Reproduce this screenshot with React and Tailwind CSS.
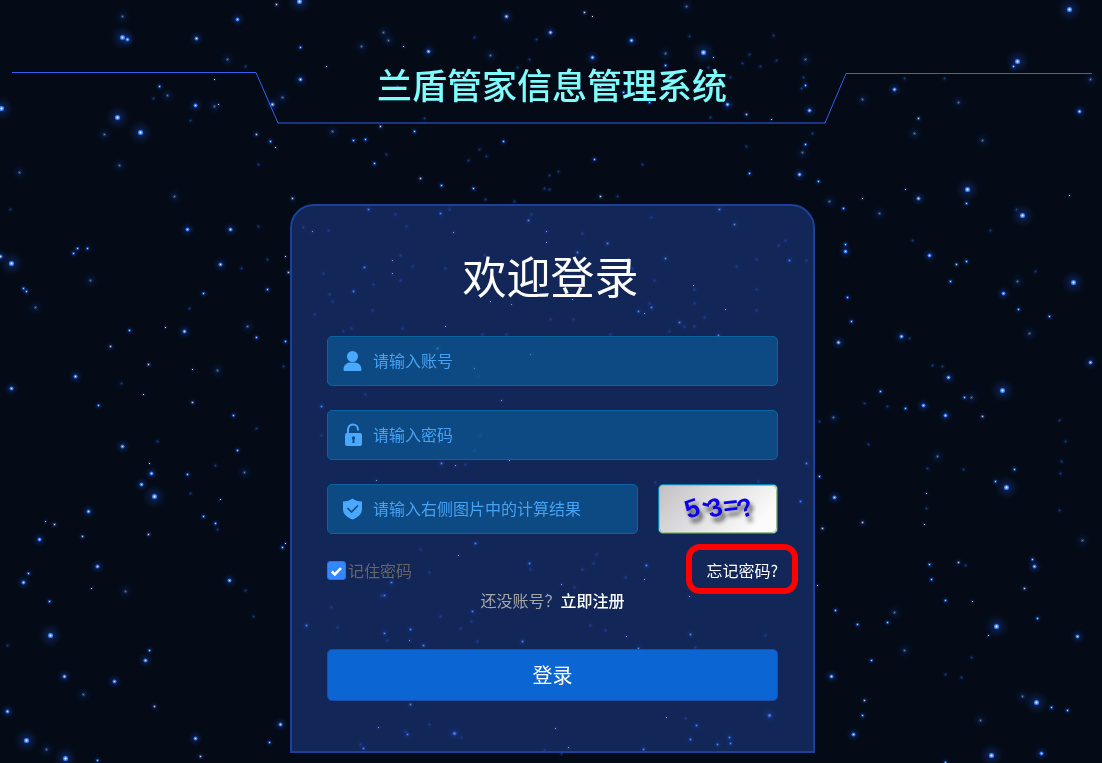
import { useState } from 'react';

// [x, y] lists, grouped by how strongly the star shines
const STARS = {
  bright: [
    [299, 1], [1, 108], [140, 132], [703, 52], [1069, 9], [967, 189], [1017, 61], [11, 263], [154, 496], [50, 635], [26, 740],
    [65, 758], [1073, 282], [1002, 390], [1006, 487], [996, 626], [1036, 702], [991, 755], [122, 37], [117, 117], [1022, 215],
  ],
  mid: [
    [127, 39], [196, 38], [237, 19], [300, 79], [187, 229], [230, 229], [195, 105], [272, 104], [506, 16], [428, 51], [550, 32],
    [631, 40], [592, 57], [727, 104], [809, 110], [799, 174], [918, 198], [1079, 111], [0, 256], [220, 264], [184, 331], [75, 376],
    [11, 388], [122, 446], [151, 473], [141, 484], [88, 511], [39, 539], [229, 580], [145, 660], [114, 681], [64, 676], [7, 711],
    [195, 738], [280, 724], [845, 251], [929, 255], [838, 342], [901, 336], [1003, 293], [1090, 362], [948, 377], [923, 405],
    [945, 415], [834, 497], [1034, 566], [1077, 636], [831, 676], [853, 734], [1041, 753], [97, 566], [894, 89], [769, 715], [454, 733],
    [23, 582],
  ],
  small: [
    [300, 47], [276, 4], [256, 134], [270, 141], [292, 198], [353, 140], [365, 139], [159, 86], [77, 248], [87, 248], [473, 188],
    [441, 185], [420, 178], [374, 163], [503, 141], [414, 131], [380, 126], [594, 159], [600, 196], [584, 12], [665, 65], [649, 102],
    [623, 92], [600, 86], [454, 81], [746, 114], [805, 85], [805, 144], [749, 173], [818, 181], [843, 208], [918, 118], [966, 203],
    [1013, 66], [845, 244], [73, 253], [23, 288], [26, 291], [288, 272], [267, 289], [203, 293], [129, 330], [256, 337], [285, 341],
    [110, 346], [148, 364], [98, 405], [192, 402], [233, 415], [237, 450], [187, 474], [54, 524], [82, 536], [148, 534], [203, 516],
    [215, 523], [282, 547], [28, 573], [49, 601], [149, 650], [154, 706], [97, 760], [200, 756], [269, 742], [956, 264], [966, 261],
    [950, 281], [847, 297], [851, 321], [1018, 309], [1049, 316], [964, 397], [905, 408], [880, 391], [982, 416], [1014, 469],
    [995, 481], [819, 476], [862, 522], [822, 528], [929, 564], [958, 562], [931, 579], [1032, 559], [1024, 588], [945, 600],
    [835, 610], [887, 622], [857, 624], [1037, 618], [871, 660], [864, 700], [862, 715], [1051, 707], [1067, 710], [945, 762],
    [368, 209], [440, 213], [528, 220], [607, 243], [734, 224], [665, 258], [577, 252], [364, 267], [353, 291], [679, 322], [718, 335],
    [651, 307], [638, 311], [789, 260], [410, 629], [423, 645], [472, 611], [522, 641], [638, 648], [690, 634], [767, 677], [410, 704],
    [363, 748], [643, 749], [696, 725], [690, 739], [729, 737], [730, 743], [717, 744], [407, 734], [306, 625], [391, 582], [475, 543],
    [384, 595], [529, 563], [646, 565], [800, 501], [806, 463], [441, 463], [321, 406], [437, 348], [719, 209], [384, 633],
  ],
  spark: [
    [326, 66], [218, 104], [275, 147], [214, 79], [592, 16], [713, 57], [862, 198], [905, 189], [1069, 195], [165, 327], [192, 369],
    [143, 394], [45, 521], [285, 543], [91, 588], [926, 493], [924, 524], [817, 585], [972, 601], [988, 635], [312, 231], [546, 231],
    [546, 242], [453, 232], [392, 260], [392, 273], [445, 326], [644, 313], [725, 309], [693, 285], [511, 304], [490, 301], [572, 299],
    [474, 368], [501, 400], [530, 354], [509, 460], [455, 465], [376, 480], [458, 555], [561, 584], [644, 579], [626, 636], [409, 640],
    [547, 594], [378, 727], [555, 728], [666, 717], [568, 747], [689, 596], [285, 256], [771, 119], [403, 46], [149, 463], [220, 499],
  ],
  dim: [
    [122, 16], [227, 59], [361, 46], [167, 95], [214, 106], [282, 97], [104, 134], [119, 165], [19, 172], [174, 196], [332, 131],
    [388, 40], [383, 32], [490, 55], [686, 6], [665, 53], [805, 59], [802, 152], [829, 201], [879, 213], [862, 99], [958, 102],
    [914, 133], [982, 140], [1090, 79], [35, 307], [90, 280], [247, 326], [217, 370], [244, 472], [125, 591], [83, 694], [46, 749],
    [1017, 281], [1029, 333], [971, 397], [833, 417], [937, 456], [1082, 540], [894, 612], [904, 650], [1022, 696], [980, 720],
  ],
  faint: [
    [245, 66], [153, 98], [190, 120], [258, 164], [10, 209], [258, 226], [303, 227], [328, 230], [474, 37], [536, 39], [517, 67],
    [529, 59], [689, 36], [708, 67], [730, 77], [710, 117], [397, 86], [479, 149], [486, 156], [468, 160], [485, 199], [514, 201],
    [549, 175], [558, 171], [544, 188], [549, 189], [642, 164], [617, 196], [386, 154], [424, 118], [773, 35], [749, 54], [742, 63],
    [760, 66], [776, 60], [803, 77], [801, 88], [746, 146], [812, 133], [904, 78], [944, 78], [1016, 209], [990, 230], [912, 240],
    [241, 268], [267, 259], [189, 308], [283, 366], [121, 383], [256, 428], [157, 441], [215, 465], [190, 493], [217, 529], [245, 590],
    [253, 616], [7, 645], [909, 338], [1035, 271], [932, 365], [942, 366], [864, 403], [887, 406], [819, 421], [868, 444], [1059, 420],
    [1065, 441], [927, 468], [963, 469], [1061, 461], [1060, 473], [926, 508], [1059, 510], [965, 565], [971, 657], [945, 674],
    [961, 677], [395, 214], [449, 209], [406, 226], [531, 214], [582, 233], [651, 217], [785, 240], [778, 245], [756, 259], [736, 266],
    [484, 255], [400, 255], [323, 273], [412, 266], [445, 268], [373, 284], [400, 280], [329, 294], [332, 301], [314, 314], [372, 310],
    [343, 331], [351, 328], [402, 328], [482, 334], [506, 334], [573, 319], [632, 268], [654, 280], [694, 289], [649, 303], [694, 303],
    [756, 289], [756, 310], [704, 317], [684, 326], [694, 326], [669, 331], [610, 334], [550, 319], [381, 595], [331, 607], [337, 627],
    [387, 640], [440, 616], [471, 621], [460, 628], [477, 641], [590, 625], [605, 630], [765, 635], [695, 647], [775, 690], [429, 724],
    [405, 731], [461, 737], [360, 744], [544, 750], [561, 753], [685, 718], [478, 376], [365, 394], [465, 464], [321, 435], [480, 435],
    [474, 450], [420, 549], [530, 569], [429, 572], [582, 569], [593, 563], [596, 554], [574, 587], [758, 481], [625, 577], [655, 482],
    [806, 260],
  ],
};

const KINDS = {
  bright: { core: 2.5, glow: 12, fill: '#3b82f6', center: 2, opacity: 1 },
  mid: { core: 2, glow: 8, fill: '#3273e6', center: 1.5, opacity: 0.95 },
  small: { core: 1.4, glow: 5, fill: '#2f70e0', center: 1, opacity: 0.85 },
  spark: { core: 0, glow: 3, fill: '#2f70e0', center: 1, opacity: 1 },
  dim: { core: 1.7, glow: 9, fill: '#4d6ea8', center: 1, opacity: 0.5 },
  faint: { core: 1, glow: 4, fill: '#2a5cc0', center: 0, opacity: 0.6 },
};

function StarField() {
  return (
    <svg className="absolute inset-0 w-full h-full" viewBox="0 0 1102 763" preserveAspectRatio="xMidYMid slice" aria-hidden="true">
      <defs>
        <radialGradient id="glow">
          <stop offset="0" stopColor="#2563eb" stopOpacity="0.6" />
          <stop offset="0.35" stopColor="#1d4ed8" stopOpacity="0.22" />
          <stop offset="1" stopColor="#1e40af" stopOpacity="0" />
        </radialGradient>
      </defs>
      {Object.entries(STARS).map(([kind, list]) => {
        const k = KINDS[kind];
        return (
          <g key={kind} opacity={k.opacity}>
            {list.map(([x, y]) => (
              <g key={`${x}-${y}`} transform={`translate(${x + 0.5} ${y + 0.5})`}>
                <circle r={k.glow} fill="url(#glow)" />
                {k.core > 0 && <circle r={k.core} fill={k.fill} />}
                {k.center > 0 && <rect x={-k.center / 2} y={-k.center / 2} width={k.center} height={k.center} fill="#e8f2ff" />}
              </g>
            ))}
          </g>
        );
      })}
    </svg>
  );
}

const UserIcon = () => (
  <svg className="w-5 h-6 shrink-0" viewBox="0 0 20 24" fill="currentColor" aria-hidden="true">
    <circle cx="9.5" cy="7.5" r="5.5" />
    <path d="M.5 20.500C.5 16.500 3.500 13.500 7 13.500h5c3.500 0 6.500 3 6.500 7 0 1-.6 1.500-1.600 1.500H2.100C1.100 22 .5 21.500.5 20.500z" />
  </svg>
);

const LockIcon = () => (
  <svg className="w-5 h-6 shrink-0" viewBox="0 0 20 24" aria-hidden="true">
    <path d="M5 11V6.500a5 5 0 0 1 10-.2V7.500" fill="none" stroke="currentColor" strokeWidth="2" />
    <rect x="2" y="10" width="17" height="13" rx="2" fill="currentColor" />
    <circle cx="10.500" cy="15" r="1.700" fill="#0d4b84" />
    <path d="M9.700 15h1.600l.3 5H9.400z" fill="#0d4b84" />
  </svg>
);

const ShieldIcon = () => (
  <svg className="w-5 h-6 shrink-0" viewBox="0 0 20 24" aria-hidden="true">
    <path d="M9.500 1.500c2.500 2 5.500 2.900 9.500 3.100v7.400c0 5-4 8.500-9.500 10.500C4 20.500 0 17 0 12V4.600C4 4.400 7 3.500 9.500 1.500z" fill="currentColor" />
    <path d="M4.500 11l4 4 6.500-6.500" fill="none" stroke="#0d4b84" strokeWidth="1.600" />
  </svg>
);

function Field({ icon, label, className = '', ...rest }) {
  return (
    <label className={`flex items-center gap-2.5 h-[50px] px-[15px] min-w-0 rounded-[5px] border border-[#0b64a0] bg-[#0870b0]/50 text-[#4aa8ff] ${className}`}>
      {icon}
      <input
        aria-label={label}
        placeholder={label}
        className="flex-1 min-w-0 pb-0.5 bg-transparent outline-none text-base leading-6 text-white placeholder:text-[#46a2f4]"
        {...rest}
      />
    </label>
  );
}

function Captcha() {
  return (
    <button type="button" aria-label="刷新验证码" className="w-[120px] h-[50px] shrink-0 overflow-hidden rounded-[5px] border border-[#0b7fb0]">
      <svg className="w-full h-full" viewBox="0 0 118 48">
        <defs>
          <linearGradient id="paper" x1="0" y1="0" x2="1" y2="0.4">
            <stop offset="0" stopColor="#c2c0c4" />
            <stop offset="1" stopColor="#fbfbfb" />
          </linearGradient>
          <filter id="shadow" x="-20%" y="-50%" width="140%" height="220%">
            <feDropShadow dx="3" dy="5" stdDeviation="2" floodColor="#222" floodOpacity="0.8" />
          </filter>
        </defs>
        <rect width="118" height="48" fill="url(#paper)" />
        <rect x="0.5" y="0.5" width="117" height="47" rx="4" fill="none" stroke="#9cc08a" />
        <text
          x="29 41 51 65 82"
          y="34 25 33 30 34"
          rotate="-18 15 -14 -6 -22"
          fontFamily="Liberation Sans, sans-serif"
          fontWeight="700"
          fontSize="26"
          fill="#0a00e6"
          filter="url(#shadow)"
        >
          5-3=?
        </text>
      </svg>
    </button>
  );
}

export default function App() {
  const [remember, setRemember] = useState(true);

  return (
    <div className="relative min-h-screen overflow-hidden bg-[#040b16] font-['Noto_Sans_CJK_SC',sans-serif] text-base">
      <StarField />

      <div className="relative pb-2.5">
        {/* Header */}
        <header className="grid pt-[58px] pl-3 pr-2.5">
          <svg className="[grid-area:1/1] mt-3.5 w-full h-[52px]" viewBox="0 0 1080 52" preserveAspectRatio="none" fill="none" stroke="#3460f0" aria-hidden="true">
            <path d="M0 .5H244L266 51H813L834 1.500H1080" />
          </svg>
          <h1 className="[grid-area:1/1] text-center text-[35px] leading-[52px] font-medium text-[#7ffcfc]">兰盾管家信息管理系统</h1>
        </header>

        {/* Login card */}
        <main className="flex justify-center pt-20 pl-[13px] pr-2.5">
          <form
            onSubmit={(e) => e.preventDefault()}
            className="flex flex-col w-full max-w-[525px] px-[35px] pt-[39px] pb-[50px] rounded-t-[24px] border-2 border-[#1c419a] bg-[#20419a]/50"
          >
            <h2 className="pr-1 text-center text-[44px] leading-[60px] text-white">欢迎登录</h2>

            <div className="flex flex-col gap-6 mt-[31px]">
              <Field icon={<UserIcon />} label="请输入账号" type="text" />
              <Field icon={<LockIcon />} label="请输入密码" type="password" />
              <div className="flex gap-5">
                <Field icon={<ShieldIcon />} label="请输入右侧图片中的计算结果" type="text" className="flex-1" />
                <Captcha />
              </div>
            </div>

            <div className="flex items-center justify-between h-8 mt-5">
              <label className="flex items-center gap-0.5 text-[#666]">
                <span className="grid">
                  <input
                    type="checkbox"
                    checked={remember}
                    onChange={() => setRemember(!remember)}
                    className="[grid-area:1/1] appearance-none w-[19px] h-[19px] rounded-[3px] border border-[#1677ff] checked:bg-[#3388ff]"
                  />
                  {remember && (
                    <svg className="[grid-area:1/1] w-[19px] h-[19px] pointer-events-none" viewBox="0 0 19 19" fill="none" stroke="#fff" strokeWidth="2.500" aria-hidden="true">
                      <path d="M4.800 10.500l3 3L14 7.200" />
                    </svg>
                  )}
                </span>
                记住密码
              </label>
              <a href="#forgot" className="relative leading-6 text-white">
                忘记密码?
                <span className="absolute -inset-x-5 -top-3.5 -bottom-3 rounded-[14px] border-6 border-[#ff0000]" />
              </a>
            </div>

            <p className="h-7 leading-7 text-center text-[#a6a6a6]">
              还没账号？<a href="#register" className="font-medium text-white">立即注册</a>
            </p>

            <button type="submit" className="h-[52px] mt-[35px] rounded-[5px] border border-[#1c4cae] bg-[#0b66d4] text-xl text-white">
              登录
            </button>
          </form>
        </main>
      </div>
    </div>
  );
}
